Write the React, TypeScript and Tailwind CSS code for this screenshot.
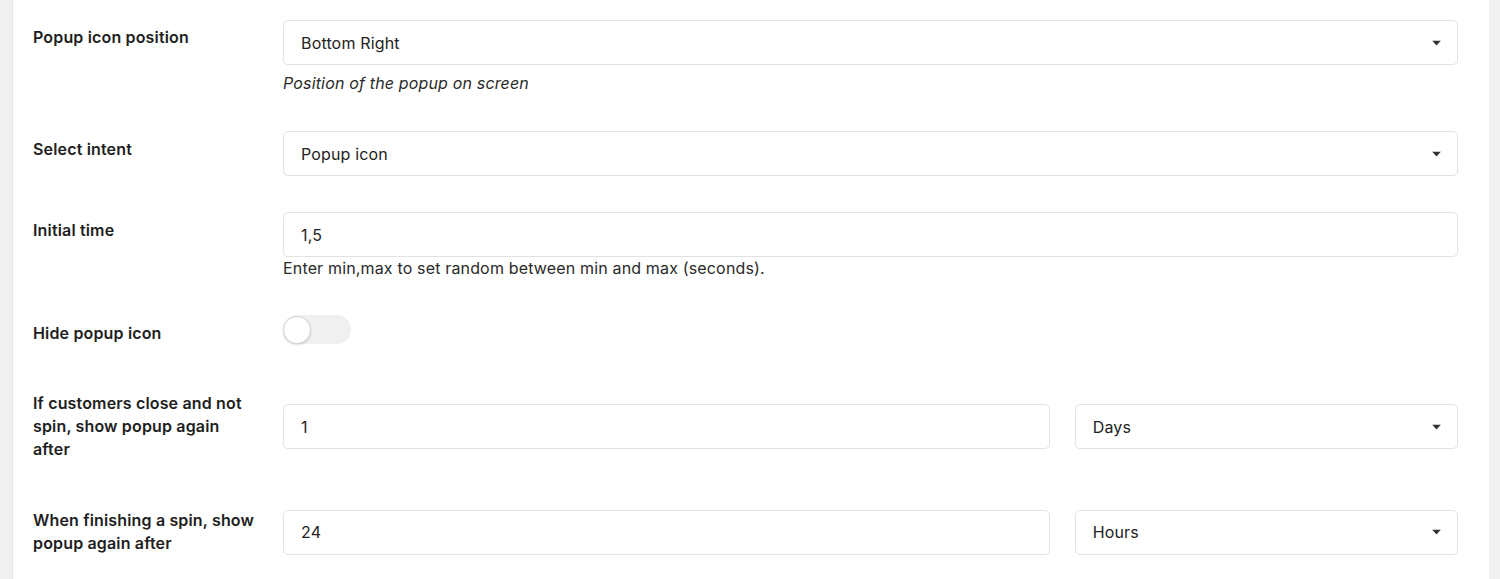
import React from 'react';

const font = { fontFamily: 'Inter, "Liberation Sans", sans-serif' };

const Caret = () => (
  <svg width="9" height="5" viewBox="0 0 9 5" className="absolute right-[16px] top-1/2 -translate-y-1/2">
    <path d="M0 0 H9 L4.5 5 Z" fill="#333" />
  </svg>
);

const Select = ({ value }: { value: string }) => (
  <div className="relative h-[45px] w-full rounded-[5px] border border-[#e2e2e2] bg-white flex items-center pl-[17px] text-[16px] tracking-[0.01em] text-[#222]">
    {value}
    <Caret />
  </div>
);

const Input = ({ value }: { value: string }) => (
  <div className="h-[45px] w-full rounded-[5px] border border-[#e2e2e2] bg-white flex items-center pl-[17px] text-[16px] tracking-[0.01em] text-[#222]">
    {value}
  </div>
);

const Label = ({ children, className = '' }: { children: React.ReactNode; className?: string }) => (
  <div className={`w-[250px] shrink-0 pr-[23px] text-[16px] tracking-[0.01em] leading-[23px] font-semibold text-[#1e1e1e] ${className}`}>
    {children}
  </div>
);

export default function App() {
  return (
    <div className="flex h-[579px] w-[1500px] bg-[#f0f0f0] overflow-hidden" style={font}>
      <div className="ml-[12px] w-[1477px] bg-white border-l border-[#e3e3e3] pl-[20px] pr-[31px] pt-[20px]">
        {/* Popup icon position */}
        <div className="flex items-start">
          <Label className="pt-[6px]">Popup icon position</Label>
          <div className="flex-1">
            <Select value="Bottom Right" />
            <p className="mt-[7px] text-[16px] tracking-[0.01em] leading-[23px] italic text-[#2a2a2a]">Position of the popup on screen</p>
          </div>
        </div>

        {/* Select intent */}
        <div className="mt-[36px] flex items-start">
          <Label className="pt-[7px]">Select intent</Label>
          <div className="flex-1">
            <Select value="Popup icon" />
          </div>
        </div>

        {/* Initial time */}
        <div className="mt-[36px] flex items-start">
          <Label className="pt-[7px]">Initial time</Label>
          <div className="flex-1">
            <Input value="1,5" />
            <p className="text-[16px] tracking-[0.01em] leading-[23px] text-[#2a2a2a]">Enter min,max to set random between min and max (seconds).</p>
          </div>
        </div>

        {/* Hide popup icon */}
        <div className="mt-[35px] flex items-start">
          <Label className="pt-[7px]">Hide popup icon</Label>
          <div className="flex-1">
            <div className="relative h-[29px] w-[68px] rounded-full bg-[#f0f0f0]">
              <div className="absolute left-0 top-[0.5px] h-[28px] w-[28px] rounded-full border border-[#d6d6d6] bg-white shadow-[0_1px_2px_rgba(0,0,0,0.15)]" />
            </div>
          </div>
        </div>

        {/* Close and not spin */}
        <div className="mt-[47px] flex items-center">
          <Label>If customers close and not spin, show popup again after</Label>
          <div className="flex flex-1 gap-[25px]">
            <div className="flex-[2]"><Input value="1" /></div>
            <div className="flex-1"><Select value="Days" /></div>
          </div>
        </div>

        {/* Finishing a spin */}
        <div className="mt-[48px] flex items-center">
          <Label>When finishing a spin, show popup again after</Label>
          <div className="flex flex-1 gap-[25px]">
            <div className="flex-[2]"><Input value="24" /></div>
            <div className="flex-1"><Select value="Hours" /></div>
          </div>
        </div>
      </div>
    </div>
  );
}
